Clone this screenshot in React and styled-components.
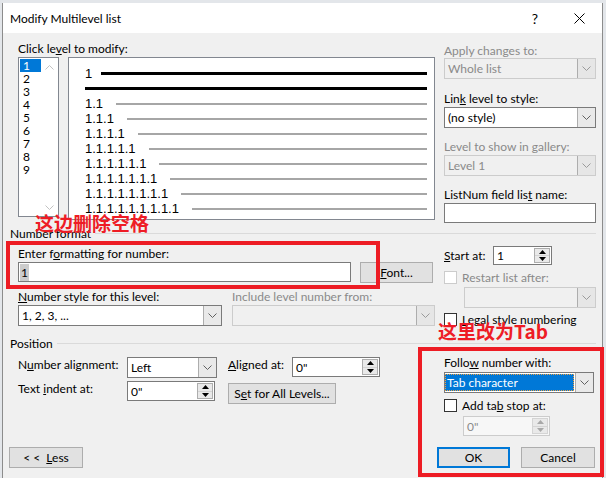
import styled, { createGlobalStyle } from "styled-components";

const GlobalStyle = createGlobalStyle`
  html, body { margin: 0; padding: 0; background: #e3e6ea; }
  body {
    font-family: Lato, "Noto Sans", sans-serif;
    font-size: 12px;
    color: #000;
  }
  * { box-sizing: border-box; }
`;

const Page = styled.div`
  position: relative;
  width: 606px;
  height: 478px;
  overflow: hidden;
  padding-top: 3px;
  background: #e3e6ea;
`;

const Window = styled.div`
  margin-left: 2px;
  width: 601px;
  height: 475px;
  border-left: 1px solid #8c8c8c;
  border-right: 1px solid #8c8c8c;
  display: flex;
  flex-direction: column;
`;

const TitleBar = styled.div`
  height: 30px;
  background: #fff;
  display: flex;
  align-items: center;
  padding-left: 7px;
  padding-right: 1px;
`;

const Title = styled.div`
  flex: 1;
  font-size: 12px;
`;

const CaptionButton = styled.div`
  width: 44px;
  height: 30px;
  display: flex;
  align-items: center;
  justify-content: center;
  font-size: 14px;
`;

const Body = styled.div`
  flex: 1;
  background: #f0f0f0;
  padding: 8px 6px 0 6px;
  display: flex;
  flex-direction: column;
`;

const Section = styled.div`
  display: flex;
  gap: 9px;
  padding-left: 9px;
  margin-top: ${({ $mt }) => $mt || 0}px;
`;

const Column = styled.div`
  width: ${({ $w }) => $w}px;
  display: flex;
  flex-direction: column;
  padding-top: ${({ $pt }) => $pt || 0}px;
`;

const Label = styled.div`
  height: 15px;
  line-height: 15px;
  white-space: nowrap;
  color: ${({ $disabled }) => ($disabled ? "#8a8a8a" : "#000")};
  margin-top: ${({ $mt }) => $mt || 0}px;
  width: ${({ $w }) => ($w ? `${$w}px` : "auto")};
`;

const Row = styled.div`
  display: flex;
  align-items: ${({ $align }) => $align || "flex-start"};
  gap: ${({ $gap }) => $gap || 0}px;
  margin-top: ${({ $mt }) => $mt || 0}px;
  margin-left: ${({ $ml }) => $ml || 0}px;
`;

const GroupHeader = styled.div`
  display: flex;
  align-items: center;
  height: 14px;
  margin-left: 1px;
  margin-top: ${({ $mt }) => $mt || 0}px;
  gap: 4px;

  &::after {
    content: "";
    flex: 1;
    height: 1px;
    background: #dadada;
  }
`;

const ListBox = styled.div`
  width: 41px;
  height: 160px;
  border: 1px solid #828790;
  background: #fff;
  padding: 1px;
  display: flex;
`;

const ListItems = styled.div`
  width: 21px;
  display: flex;
  flex-direction: column;
`;

const ListItem = styled.div`
  height: 13px;
  line-height: 13px;
  padding-left: 3px;
  background: ${({ $selected }) => ($selected ? "#0078d7" : "transparent")};
  color: ${({ $selected }) => ($selected ? "#fff" : "#000")};
`;

const ScrollBar = styled.div`
  flex: 1;
  display: flex;
  flex-direction: column;
  justify-content: space-between;
  align-items: center;
  padding: 6px 0 5px;
`;

const Preview = styled.div`
  width: 367px;
  height: 163px;
  border: 1px solid #828790;
  background: #fff;
  padding: 8px 7px 0 16px;
  display: flex;
  flex-direction: column;
`;

const PreviewRow = styled.div`
  height: 15px;
  display: flex;
  align-items: center;
  font-family: "Liberation Sans", Arial, sans-serif;
  font-size: 13px;
`;

const PreviewNum = styled.span`
  margin-right: ${({ $gap }) => $gap}px;
  white-space: nowrap;
`;

const PreviewLine = styled.div`
  flex: 1;
  height: ${({ $thick }) => ($thick ? 3 : 2)}px;
  background: ${({ $thick }) => ($thick ? "#000" : "#a6a6a6")};
`;

const Combo = styled.div`
  width: ${({ $w }) => $w}px;
  height: 21px;
  border: 1px solid ${({ $disabled }) => ($disabled ? "#cccccc" : "#7a7a7a")};
  background: ${({ $disabled }) => ($disabled ? "#f0f0f0" : "#fff")};
  display: flex;
  margin-top: ${({ $mt }) => $mt || 0}px;
  margin-left: ${({ $ml }) => $ml || 0}px;
  color: ${({ $disabled }) => ($disabled ? "#8a8a8a" : "#000")};
`;

const ComboText = styled.div`
  flex: 1;
  display: flex;
  align-items: center;
  padding-left: 3px;
  white-space: nowrap;
`;

const Highlight = styled.div`
  flex: 1;
  margin: 1px 1px 1px 0;
  background: #0078d7;
  color: #fff;
  display: flex;
  align-items: center;
  padding-left: 2px;
  outline: 1px dotted #f0a040;
  outline-offset: -1px;
`;

const ComboArrow = styled.div`
  width: 18px;
  background: ${({ $disabled }) => ($disabled ? "#e6e6e6" : "#e9e9e9")};
  border-left: 1px solid #adadad;
  display: flex;
  align-items: center;
  justify-content: center;
`;

const TextBox = styled.div`
  width: ${({ $w }) => $w}px;
  height: 20px;
  border: 1px solid #7a7a7a;
  background: #fff;
  margin-top: ${({ $mt }) => $mt || 0}px;
  display: flex;
  align-items: center;
  padding-left: 1px;
`;

const SelectedText = styled.span`
  background: #cccccc;
  padding: 1px 1px;
  line-height: 15px;
`;

const Spin = styled.div`
  width: ${({ $w }) => $w}px;
  height: ${({ $h }) => $h || 20}px;
  border: 1px solid ${({ $disabled }) => ($disabled ? "#cccccc" : "#7a7a7a")};
  background: ${({ $disabled }) => ($disabled ? "#f7f7f7" : "#fff")};
  color: ${({ $disabled }) => ($disabled ? "#8a8a8a" : "#000")};
  display: flex;
  margin-top: ${({ $mt }) => $mt || 0}px;
  margin-left: ${({ $ml }) => $ml || 0}px;
`;

const SpinText = styled.div`
  flex: 1;
  display: flex;
  align-items: center;
  padding-left: 3px;
`;

const SpinButtons = styled.div`
  width: 16px;
  margin: 1px;
  border: 1px solid ${({ $disabled }) => ($disabled ? "#d4d4d4" : "#adadad")};
  background: #e9e9e9;
  display: flex;
  flex-direction: column;
`;

const SpinHalf = styled.div`
  flex: 1;
  display: flex;
  align-items: center;
  justify-content: center;
  & + & {
    border-top: 1px solid ${({ $disabled }) => ($disabled ? "#d4d4d4" : "#adadad")};
  }
`;

const Button = styled.div`
  width: ${({ $w }) => $w}px;
  height: 21px;
  background: #e1e1e1;
  border: ${({ $default }) => ($default ? "2px solid #0078d7" : "1px solid #adadad")};
  display: flex;
  align-items: center;
  justify-content: center;
  margin-top: ${({ $mt }) => $mt || 0}px;
  white-space: pre;
`;

const CheckRow = styled.div`
  display: flex;
  align-items: center;
  gap: 5px;
  height: 14px;
  margin-top: ${({ $mt }) => $mt || 0}px;
  color: ${({ $disabled }) => ($disabled ? "#8a8a8a" : "#000")};
`;

const CheckBox = styled.div`
  width: 13px;
  height: 13px;
  border: 1px solid ${({ $disabled }) => ($disabled ? "#cccccc" : "#333")};
  background: #fff;
`;

const PositionGrid = styled.div`
  display: grid;
  grid-template-columns: 109px 101px 64px 88px;
  grid-template-rows: 21px 21px;
  row-gap: 3px;
  align-items: start;
  margin-top: 7px;
`;

const WideCell = styled.div`
  grid-column: 3 / 5;
`;

const Footer = styled.div`
  display: flex;
  justify-content: space-between;
  margin-top: 11px;
  padding-right: 1px;
`;

const ButtonGroup = styled.div`
  display: flex;
  gap: 11px;
`;

const RedBox = styled.div`
  position: absolute;
  left: ${({ $x }) => $x}px;
  top: ${({ $y }) => $y}px;
  width: ${({ $w }) => $w}px;
  height: ${({ $h }) => $h}px;
  border: 4px solid #ed1c24;
  pointer-events: none;
`;

const RedNote = styled.div`
  position: absolute;
  left: ${({ $x }) => $x}px;
  top: ${({ $y }) => $y}px;
  font-family: "Noto Sans CJK SC", "Noto Sans", sans-serif;
  font-weight: 700;
  font-size: 19px;
  line-height: 19px;
  color: #ee1c25;
  white-space: nowrap;
`;

const Chevron = ({ dir = "down", color = "#606060" }) => (
  <svg width="9" height="5" viewBox="0 0 9 5">
    <polyline
      points={dir === "down" ? "0.5,0.5 4.5,4.5 8.5,0.5" : "0.5,4.5 4.5,0.5 8.5,4.5"}
      fill="none"
      stroke={color}
      strokeWidth="1"
    />
  </svg>
);

const Tri = ({ up, color = "#000" }) => (
  <svg width="7" height="4" viewBox="0 0 7 4">
    <polygon points={up ? "0,4 3.5,0 7,4" : "0,0 7,0 3.5,4"} fill={color} />
  </svg>
);

function ComboBox({ w, text, disabled, mt, ml, selected }) {
  return (
    <Combo $w={w} $disabled={disabled} $mt={mt} $ml={ml}>
      {selected ? <Highlight>{text}</Highlight> : <ComboText>{text}</ComboText>}
      <ComboArrow $disabled={disabled}>
        <Chevron color={disabled ? "#9a9a9a" : "#606060"} />
      </ComboArrow>
    </Combo>
  );
}

function SpinBox({ w, h, text, disabled, mt, ml }) {
  const c = disabled ? "#a8a8a8" : "#000";
  return (
    <Spin $w={w} $h={h} $disabled={disabled} $mt={mt} $ml={ml}>
      <SpinText>{text}</SpinText>
      <SpinButtons $disabled={disabled}>
        <SpinHalf $disabled={disabled}>
          <Tri up color={c} />
        </SpinHalf>
        <SpinHalf $disabled={disabled}>
          <Tri color={c} />
        </SpinHalf>
      </SpinButtons>
    </Spin>
  );
}

const levels = [1, 2, 3, 4, 5, 6, 7, 8, 9];

export default function App() {
  const subRows = [2, 3, 4, 5, 6, 7, 8, 9].map((n) => Array(n).fill("1").join("."));

  return (
    <Page>
      <GlobalStyle />
      <Window>
        <TitleBar>
          <Title>Modify Multilevel list</Title>
          <CaptionButton>?</CaptionButton>
          <CaptionButton>
            <svg width="11" height="11" viewBox="0 0 11 11">
              <path d="M0.5 0.5 L10.5 10.5 M10.5 0.5 L0.5 10.5" stroke="#000" strokeWidth="1" />
            </svg>
          </CaptionButton>
        </TitleBar>

        <Body>
          <Section>
            <Column $w={417}>
              <Label>
                Click le<u>v</u>el to modify:
              </Label>
              <Row $gap={9} $mt={1}>
                <ListBox>
                  <ListItems>
                    {levels.map((l) => (
                      <ListItem key={l} $selected={l === 1}>
                        {l}
                      </ListItem>
                    ))}
                  </ListItems>
                  <ScrollBar>
                    <Chevron dir="up" color="#c2c2c2" />
                    <Chevron color="#c2c2c2" />
                  </ScrollBar>
                </ListBox>
                <Preview>
                  <PreviewRow>
                    <PreviewNum $gap={9}>1</PreviewNum>
                    <PreviewLine $thick />
                  </PreviewRow>
                  <PreviewRow>
                    <PreviewLine $thick />
                  </PreviewRow>
                  {subRows.map((t) => (
                    <PreviewRow key={t}>
                      <PreviewNum $gap={13}>{t}</PreviewNum>
                      <PreviewLine />
                    </PreviewRow>
                  ))}
                </Preview>
              </Row>
            </Column>

            <Column $w={152} $pt={2}>
              <Label $disabled>Apply changes to:</Label>
              <ComboBox w={152} text="Whole list" disabled />
              <Label $mt={12}>
                Lin<u>k</u> level to style:
              </Label>
              <ComboBox w={152} text="(no style)" mt={1} />
              <Label $mt={11} $disabled>
                Level to show in gallery:
              </Label>
              <ComboBox w={152} text="Level 1" disabled mt={1} />
              <Label $mt={11}>
                ListNum field lis<u>t</u> name:
              </Label>
              <TextBox $w={152} $mt={1} />
            </Column>
          </Section>

          <GroupHeader $mt={3}>Number format</GroupHeader>

          <Section>
            <Column $w={417}>
              <Label $mt={6}>
                Enter f<u>o</u>rmatting for number:
              </Label>
              <Row $gap={9} $mt={1}>
                <TextBox $w={333}>
                  <SelectedText>1</SelectedText>
                </TextBox>
                <Button $w={73}>
                  <span>
                    <u>F</u>ont...
                  </span>
                </Button>
              </Row>
              <Row $gap={10} $mt={6}>
                <Column $w={204}>
                  <Label>
                    <u>N</u>umber style for this level:
                  </Label>
                  <ComboBox w={204} text="1, 2, 3, ..." mt={1} />
                </Column>
                <Column $w={203}>
                  <Label $disabled>Include level number from:</Label>
                  <ComboBox w={203} text="" disabled mt={1} />
                </Column>
              </Row>
            </Column>

            <Column $w={152}>
              <Row $align="center" $mt={6}>
                <Label $w={49}>
                  <u>S</u>tart at:
                </Label>
                <SpinBox w={59} h={19} text="1" />
              </Row>
              <CheckRow $mt={5} $disabled>
                <CheckBox $disabled />
                <span>Restart list after:</span>
              </CheckRow>
              <ComboBox w={132} text="" disabled mt={3} ml={20} />
              <CheckRow $mt={4}>
                <CheckBox />
                <span>
                  <u>L</u>egal style numbering
                </span>
              </CheckRow>
            </Column>
          </Section>

          <GroupHeader $mt={10}>Position</GroupHeader>

          <Section>
            <Column $w={417}>
              <PositionGrid>
                <Label>
                  N<u>u</u>mber alignment:
                </Label>
                <ComboBox w={90} text="Left" />
                <Label>
                  <u>A</u>ligned at:
                </Label>
                <SpinBox w={88} text='0"' />
                <Label>
                  Text <u>i</u>ndent at:
                </Label>
                <SpinBox w={88} text='0"' />
                <WideCell>
                  <Button $w={108} $mt={2}>
                    <span>
                      S<u>e</u>t for All Levels...
                    </span>
                  </Button>
                </WideCell>
              </PositionGrid>
            </Column>

            <Column $w={152}>
              <Label $mt={5}>
                Follo<u>w</u> number with:
              </Label>
              <ComboBox w={150} text="Tab character" selected mt={2} />
              <CheckRow $mt={5}>
                <CheckBox />
                <span>
                  Add ta<u>b</u> stop at:
                </span>
              </CheckRow>
              <SpinBox w={87} text='0"' disabled mt={4} ml={19} />
            </Column>
          </Section>

          <Footer>
            <Button $w={74}>
              <span>
                {"< <  "}
                <u>L</u>ess
              </span>
            </Button>
            <ButtonGroup>
              <Button $w={73} $default>
                OK
              </Button>
              <Button $w={74}>Cancel</Button>
            </ButtonGroup>
          </Footer>
        </Body>
      </Window>

      <RedBox $x={6} $y={241} $w={374} $h={48} />
      <RedBox $x={418} $y={347} $w={186} $h={130} />
      <RedNote $x={35} $y={213}>这边删除空格</RedNote>
      <RedNote $x={438} $y={321}>这里改为Tab</RedNote>
    </Page>
  );
}
